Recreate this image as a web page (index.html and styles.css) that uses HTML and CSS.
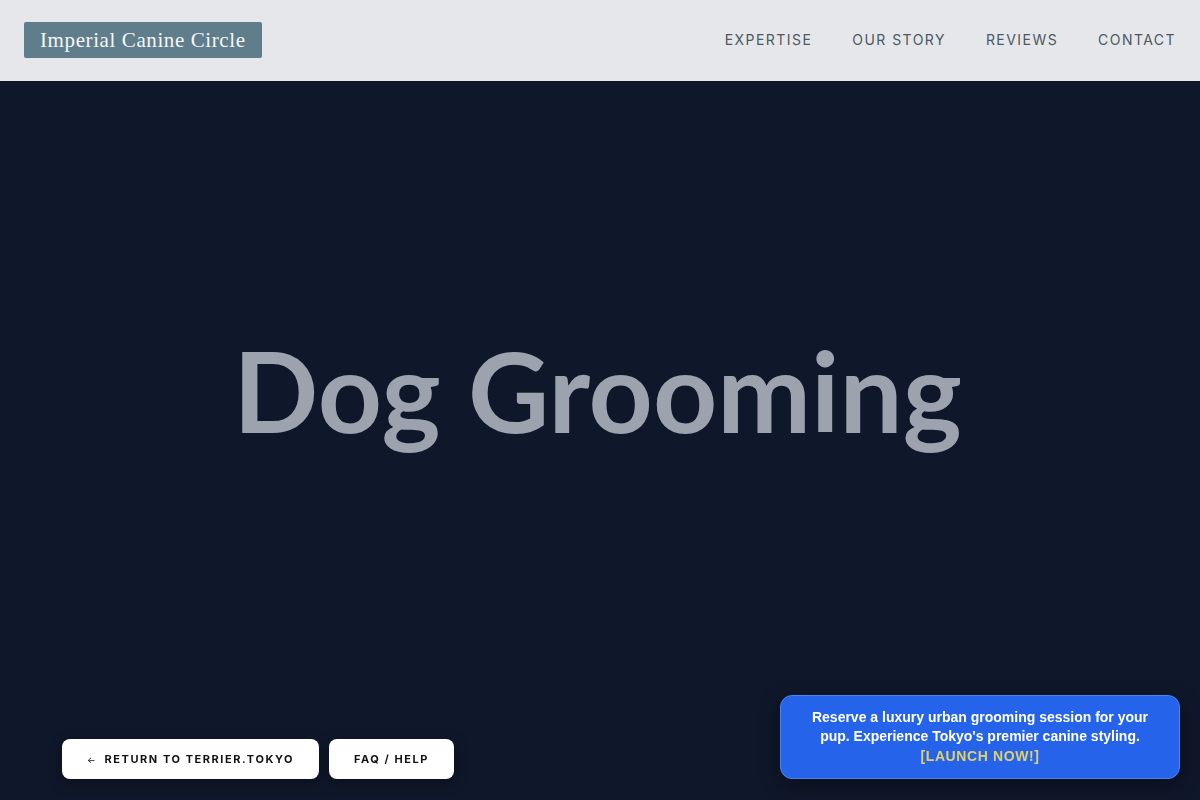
FILE: index.html
```html
<!DOCTYPE html>
<html lang="en">
<head>
<meta charset="utf-8">
<title>Imperial Canine Circle</title>
<link rel="stylesheet" href="styles.css">
</head>
<body>
<header class="site-header">
  <a class="logo" href="#">Imperial Canine Circle</a>
  <nav class="nav">
    <a href="#">EXPERTISE</a>
    <a href="#">OUR STORY</a>
    <a href="#">REVIEWS</a>
    <a href="#">CONTACT</a>
  </nav>
</header>
<main class="hero">
  <h1 class="hero-title">Dog Grooming</h1>
</main>
<div class="footer-links">
  <a class="pill" href="#"><span class="arrow">←</span>RETURN TO TERRIER.TOKYO</a>
  <a class="pill" href="#">FAQ / HELP</a>
</div>
<div class="promo">
  Reserve a luxury urban grooming session for your pup. Experience Tokyo's premier canine styling.
  <a class="promo-link" href="#">[LAUNCH NOW!]</a>
</div>
</body>
</html>
```

FILE: styles.css
```css
* { box-sizing: border-box; }
html, body { margin: 0; padding: 0; }
body {
  background: #0f172a;
  font-family: "Inter", "Liberation Sans", sans-serif;
  overflow: hidden;
}
a { text-decoration: none; }

.site-header {
  position: fixed;
  top: 0; left: 0; right: 0;
  height: 81px;
  background: #e5e7eb;
  display: flex;
  align-items: center;
  justify-content: space-between;
  padding: 0 24px 1px;
  z-index: 10;
}
.logo {
  background: #607d8b;
  color: #f5f7f8;
  font-family: "Liberation Serif", "Times New Roman", serif;
  font-size: 21px;
  letter-spacing: 0.6px;
  padding: 4px 16px;
  border-radius: 2px;
  line-height: 28px;
}
.nav {
  display: flex;
  gap: 40px;
  padding-bottom: 2px;
}
.nav a {
  color: #4b5960;
  font-size: 14px;
  letter-spacing: 1.45px;
}

.hero {
  height: 100vh;
  display: flex;
  align-items: center;
  justify-content: center;
  padding-bottom: 22px;
  padding-right: 5px;
}
.hero-title {
  margin: 0;
  font-family: "Lato", sans-serif;
  font-weight: 700;
  font-size: 112px;
  color: #9ca3af;
  letter-spacing: 0;
}

.footer-links {
  position: fixed;
  left: 62px;
  bottom: 21px;
  display: flex;
  gap: 10px;
}
.pill {
  background: #ffffff;
  color: #111111;
  height: 40px;
  display: flex;
  align-items: center;
  padding: 0 25px 0 25px;
  border-radius: 8px;
  font-size: 11px;
  font-weight: 700;
  letter-spacing: 1.55px;
  box-shadow: 0 4px 14px rgba(0,0,0,0.35);
}
.arrow {
  font-size: 9px;
  font-weight: 400;
  margin-right: 9px;
  letter-spacing: 0;
}

.promo {
  position: fixed;
  right: 20px;
  bottom: 21px;
  width: 400px;
  background: #2563eb;
  border: 1px solid #4b83f0;
  border-radius: 12px;
  padding: 12px 24px;
  color: #ffffff;
  font-family: "Liberation Sans", Arial, sans-serif;
  font-weight: 700;
  font-size: 14px;
  line-height: 19.5px;
  text-align: center;
  box-shadow: 0 6px 20px rgba(0,0,0,0.4);
}
.promo-link {
  color: #e2d06c;
  letter-spacing: 0.6px;
}
```
